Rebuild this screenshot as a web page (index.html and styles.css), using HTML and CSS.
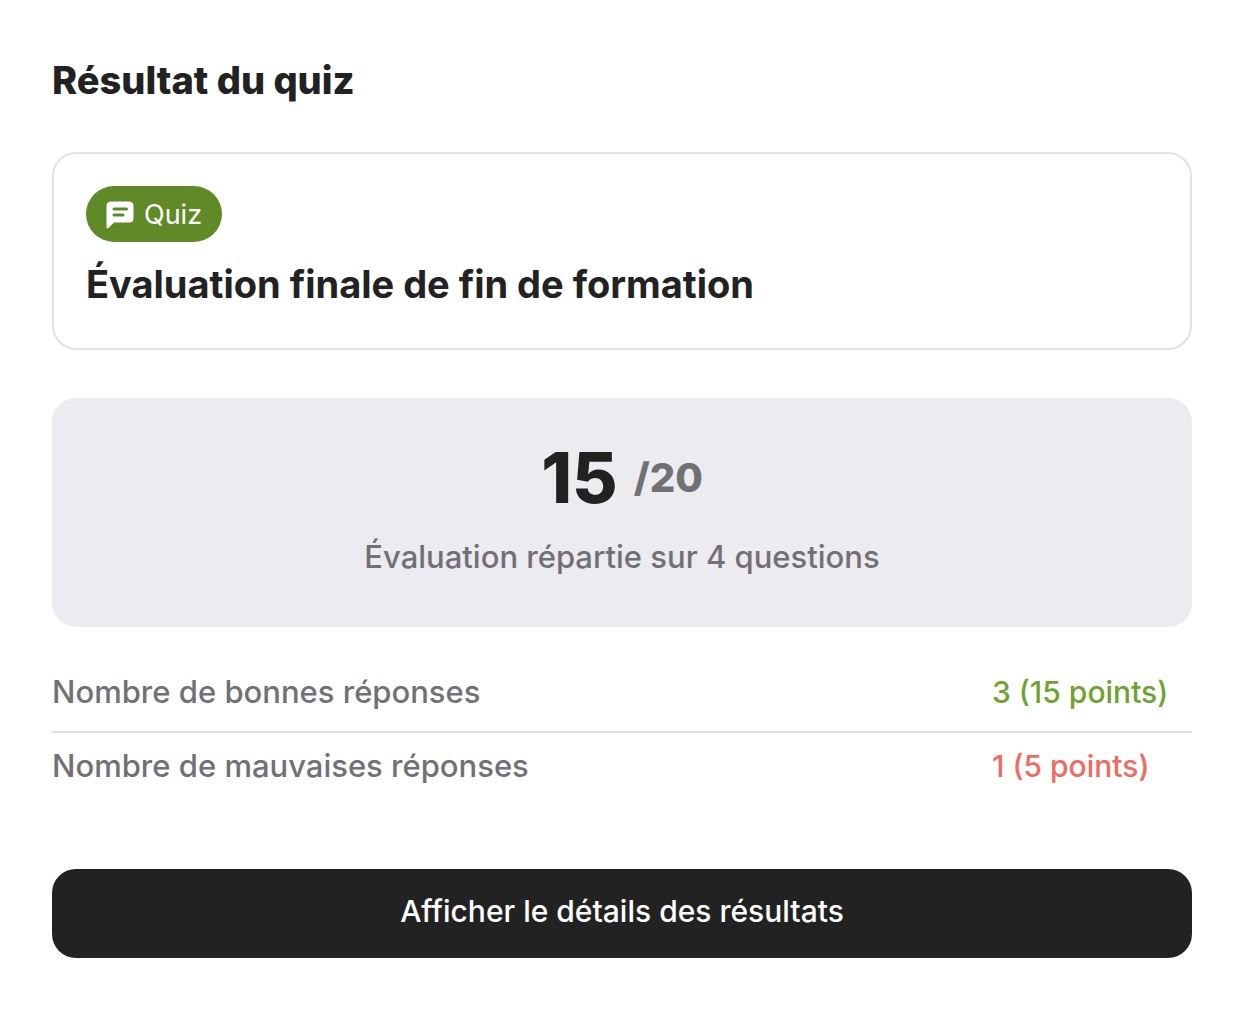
FILE: index.html
```html
<!DOCTYPE html>
<html lang="fr">

<head>
    <meta charset="UTF-8">
    <meta name="viewport" content="width=device-width, initial-scale=1.0">
    <title>Résultat du quiz</title>
    <link rel="stylesheet" href="styles.css">
</head>

<body>
    <main class="result">
        <h1>Résultat du quiz</h1>

        <section class="quiz_card">
            <div class="badge">
                <svg class="badge_icon" viewBox="0 0 28 28" aria-hidden="true">
                    <path fill="#fff" fill-rule="evenodd" d="M5 0.500H23Q27.500 0.500 27.500 5V17Q27.500 21.500 23 21.500H8L2.500 27Q0.500 28.300 0.500 26V5Q0.500 0.500 5 0.500ZM8 6.500a1.500 1.500 0 0 0 0 3H20.500a1.500 1.500 0 0 0 0-3ZM8 12.500a1.500 1.500 0 0 0 0 3H17a1.500 1.500 0 0 0 0-3Z"/>
                </svg>
                <span>Quiz</span>
            </div>
            <h2>Évaluation finale de fin de formation</h2>
        </section>

        <section class="score">
            <p class="score_value"><strong>15</strong> <span class="score_total">/20</span></p>
            <p class="score_text">Évaluation répartie sur 4 questions</p>
        </section>

        <table class="answers">
            <tr>
                <th scope="row">Nombre de bonnes réponses</th>
                <td class="good">3 (15 points)</td>
            </tr>
            <tr>
                <th scope="row">Nombre de mauvaises réponses</th>
                <td class="bad">1 (5 points)</td>
            </tr>
        </table>

        <button type="button" class="details_btn">Afficher le détails des résultats</button>
    </main>
</body>

</html>
```
FILE: styles.css
```css
* {
    box-sizing: border-box;
}

body {
    margin: 0;
    background-color: #fff;
    color: #222;
    font-family: Inter, "Liberation Sans", sans-serif;
    font-size: 31px;
    font-weight: 500;
    line-height: 40px;
}

h1,
h2,
p {
    margin: 0;
}

.result {
    padding: 56px 52px 52px;
}

h1 {
    font-size: 38px;
    font-weight: 800;
    line-height: 48px;
}

.quiz_card {
    margin-top: 48px;
    padding: 32px 32px 40px;
    border: 2px solid #e2e2e4;
    border-radius: 24px;
}

.badge {
    display: inline-flex;
    align-items: center;
    gap: 10px;
    height: 56px;
    padding: 2px 20px 0;
    border-radius: 28px;
    background-color: #5f8a27;
    color: #fff;
    font-size: 27px;
    font-weight: 400;
    vertical-align: top;
}

.badge_icon {
    width: 28px;
    height: 28px;
}

h2 {
    margin-top: 18px;
    font-size: 38px;
    font-weight: 700;
    line-height: 48px;
}

.score {
    margin-top: 48px;
    padding: 40px 32px 50px;
    border-radius: 24px;
    background-color: #ecebf0;
    color: #717075;
    text-align: center;
}

.score_value {
    display: flex;
    align-items: center;
    justify-content: center;
    gap: 16px;
    font-size: 40px;
    font-weight: 800;
    line-height: 80px;
}

.score_value strong {
    color: #222;
    font-size: 70px;
    font-weight: 800;
}

.score_text {
    margin-top: 19px;
}

.answers {
    width: 100%;
    margin-top: 32px;
    border-collapse: collapse;
    color: #717075;
}

.answers th,
.answers td {
    padding: 13px 0 19px;
    font-weight: 500;
    text-align: left;
}

.answers tr + tr {
    border-top: 2px solid #dedfdf;
}

.answers td {
    width: 200px;
    font-size: 30px;
}

.answers .good {
    color: #70a22f;
}

.answers .bad {
    color: #f26a60;
}

.details_btn {
    display: block;
    width: 100%;
    margin-top: 64px;
    padding: 22px 24px 27px;
    border: 0;
    border-radius: 24px;
    background-color: #222;
    color: #fff;
    font-family: inherit;
    font-size: 30px;
    font-weight: 500;
    line-height: 40px;
    cursor: pointer;
}
```
